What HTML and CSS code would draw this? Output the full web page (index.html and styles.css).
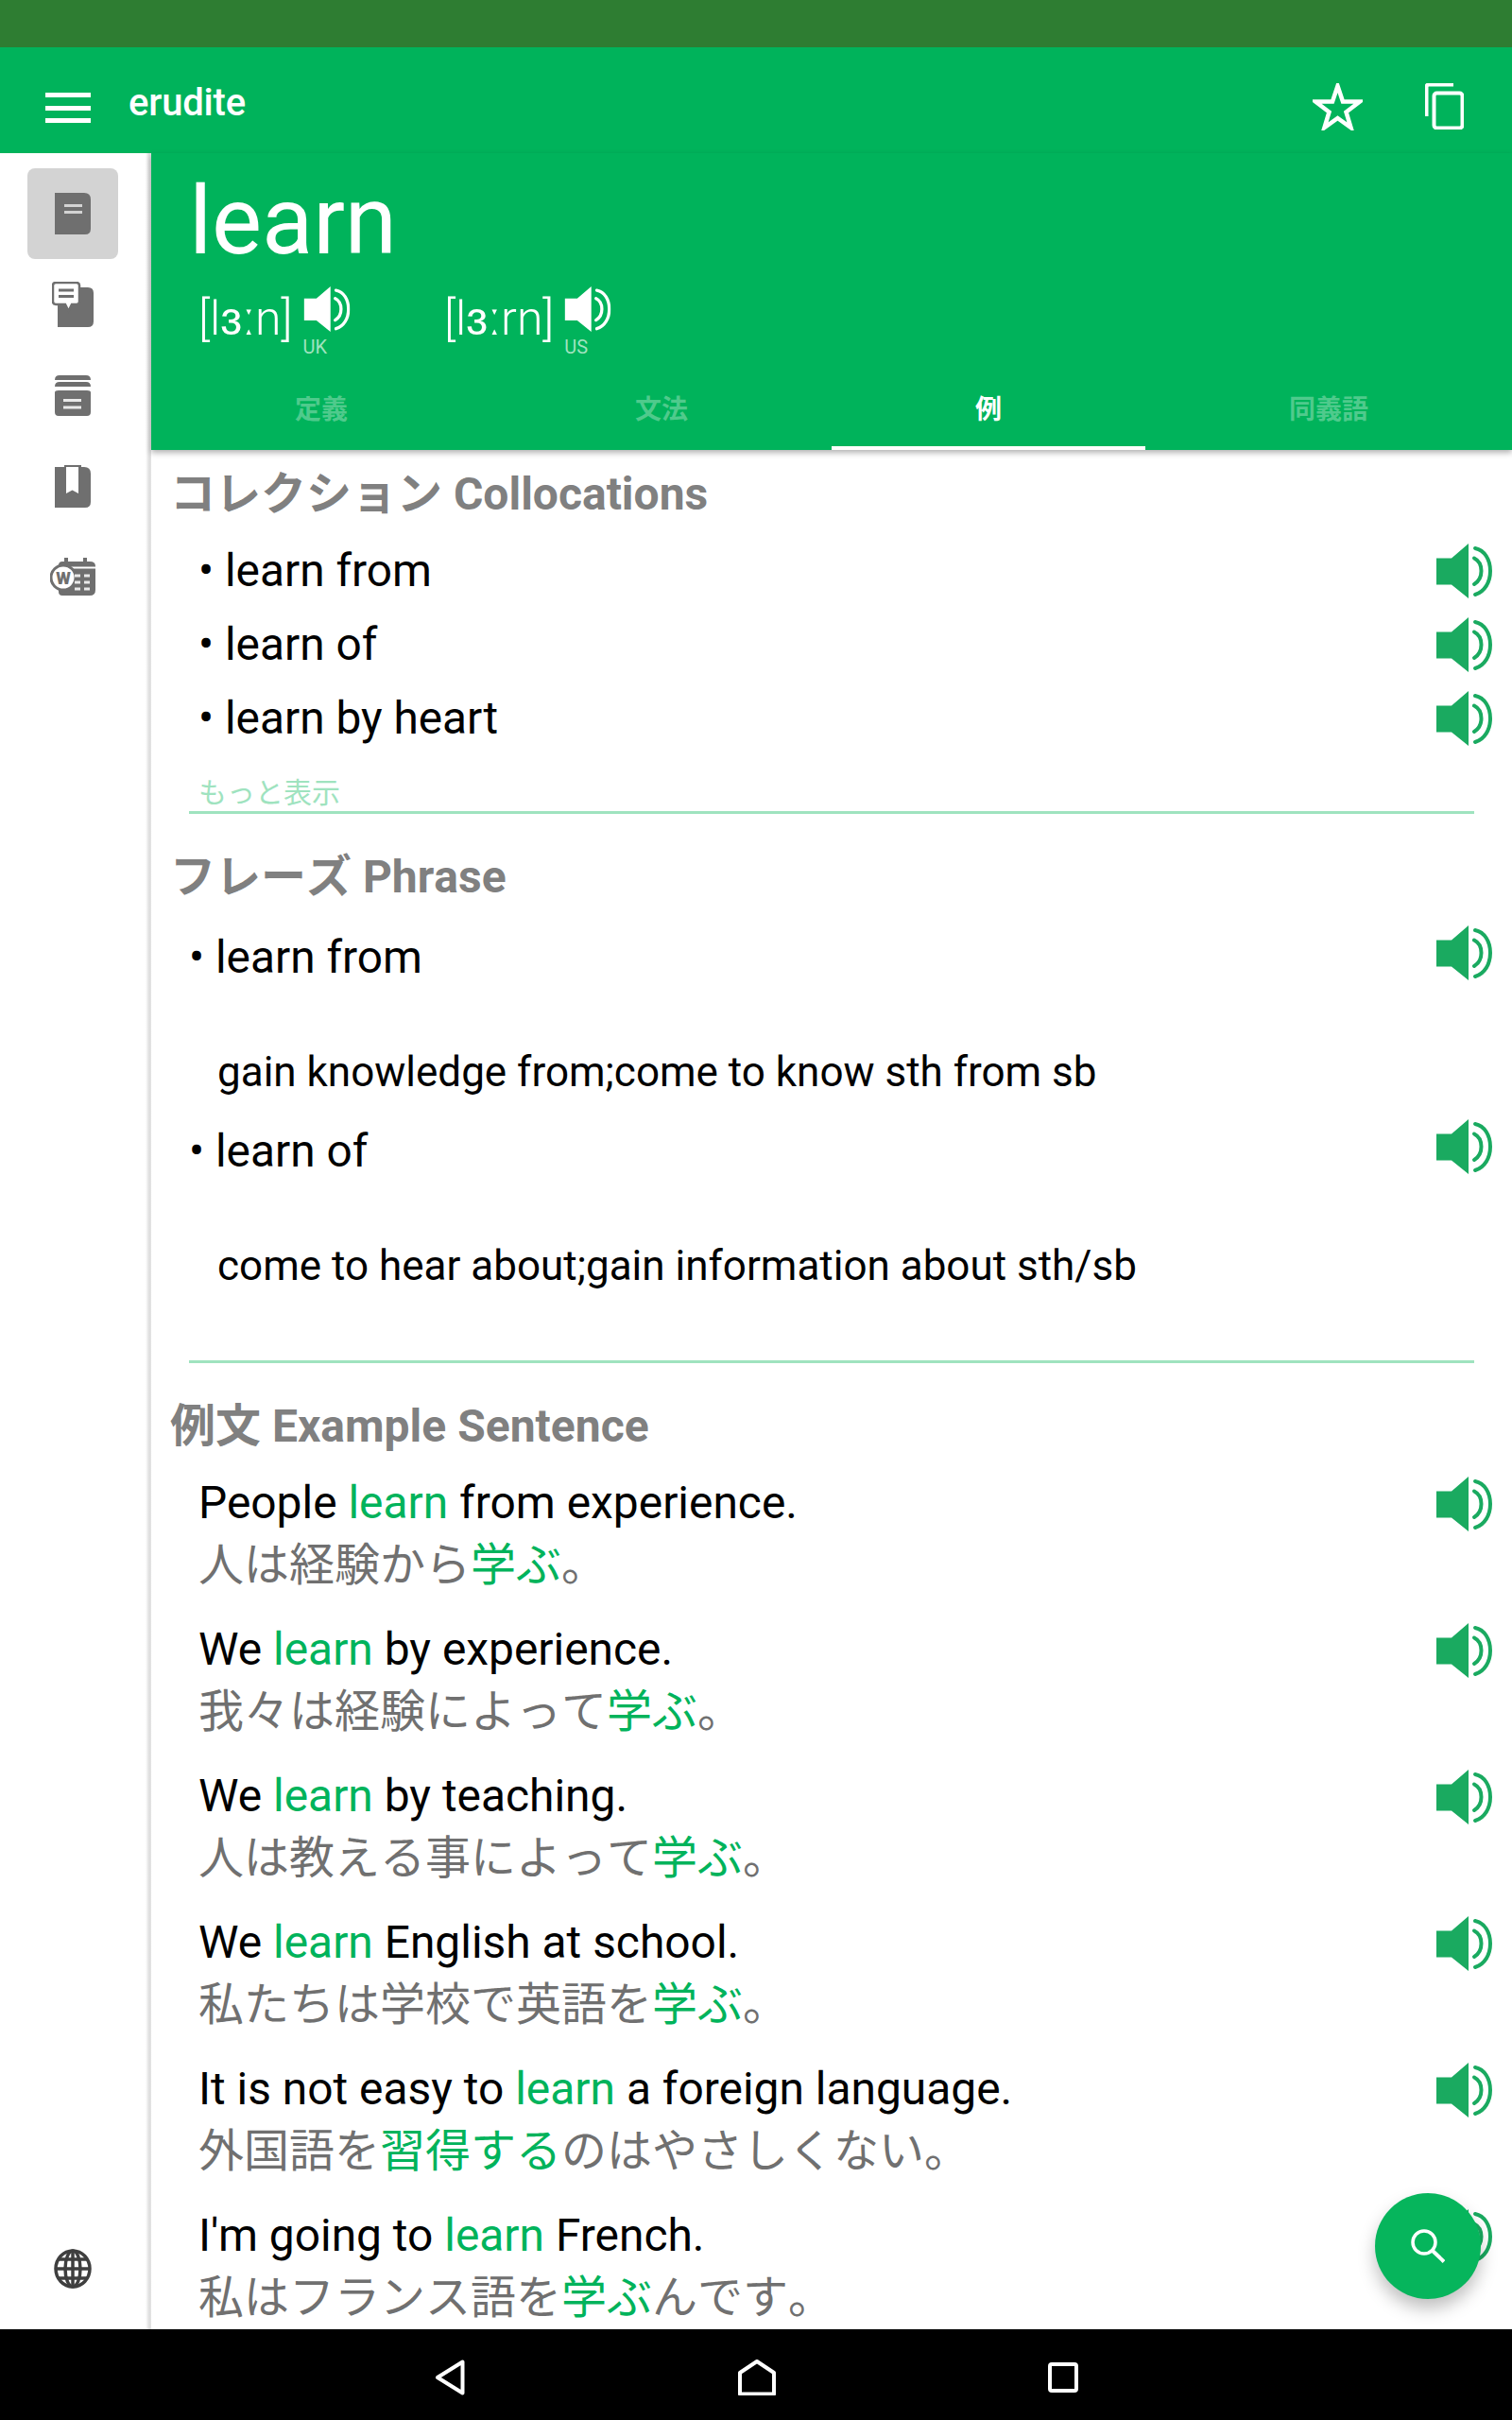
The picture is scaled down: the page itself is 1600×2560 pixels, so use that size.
FILE: index.html
```html
<!DOCTYPE html>
<html lang="ja">
<head>
<meta charset="utf-8">
<title>erudite</title>
<link rel="stylesheet" href="styles.css">
</head>
<body>
<svg class="defs" width="0" height="0">
  <symbol id="spk" viewBox="0 0 59 58">
    <path class="cone" d="M0 15.500H16L34 0V58L16 43.500H0Z"/>
    <path class="wave" d="M41 5C51 7 57 17 57 29S51 51 41 54"/>
    <path class="wave" d="M40 15.500C45 18 47.500 23 47.500 29S45 40 40 43"/>
  </symbol>
</svg>
<div class="screen">
  <div class="status"></div>
  <header class="appbar">
    <button class="menu" aria-label="menu"><span></span><span></span><span></span></button>
    <div class="appname">erudite</div>
    <svg class="star" viewBox="0 0 53 50"><path d="M26.500 3L32 19.500H50L35.500 30.500L40.500 47L26.500 37L12.500 47L17.500 30.500L3 19.500H21Z"/></svg>
    <svg class="copy" viewBox="0 0 41 49"><path class="c1" d="M1.500 35V4Q1.500 1.500 4 1.500H30"/><rect class="c2" x="9.500" y="10.500" width="30" height="37" rx="3"/></svg>
  </header>
  <div class="body">
    <nav class="sidebar">
      <div class="navitem active">
        <svg width="38" height="44" viewBox="0 0 38 44"><path class="ico" d="M0 0H31Q38 0 38 7V38Q38 44 32 44H0Z"/><path class="cut" d="M10 13.500H29M10 20.500H29"/></svg>
      </div>
      <div class="navitem">
        <svg width="44" height="48" viewBox="0 0 44 48"><path class="ico" d="M6 6H38Q44 6 44 12V42Q44 48 38 48H6Z"/><path d="M4 1H26Q29 1 29 4V21Q29 24 26 24H21L17.500 31L14 24H4Q1 24 1 21V4Q1 1 4 1Z" fill="#fff" stroke="#6f6f6f" stroke-width="2.500"/><path class="ln" d="M7 9H23M7 15.500H23"/></svg>
      </div>
      <div class="navitem">
        <svg width="38" height="43" viewBox="0 0 38 43"><path class="ico" d="M0 5Q0 0 5 0H33Q38 0 38 5H0ZM0 12Q0 7 5 7H33Q38 7 38 12H0ZM0 18Q0 16 4 16H34Q38 16 38 18V39Q38 43 34 43H4Q0 43 0 39Z"/><path class="cut" d="M9 26.500H28M9 34H28"/></svg>
      </div>
      <div class="navitem">
        <svg width="38" height="45" viewBox="0 0 38 45"><path class="ico" d="M0 2H10V0H28V2H31Q38 2 38 9V39Q38 45 32 45H0Z"/><path d="M12 2H25V30L18.500 26.500L12 30Z" fill="#fff"/></svg>
      </div>
      <div class="navitem">
        <svg width="48" height="40" viewBox="0 0 48 40"><path class="ico" d="M9 8Q9 4 13 4H15V0H19V4H35V0H39V4H42Q48 4 48 9V34Q48 40 42 40H13Q9 40 9 36Z"/><path class="cut thin" d="M22 10.500H48"/><circle cx="14" cy="21" r="13" fill="#fff" stroke="#6f6f6f" stroke-width="3"/><text x="14" y="27.500" class="wmark">W</text><path class="cut" d="M26 19H32M36 19H42M26 26H32M36 26H42M26 33H32M36 33H42"/></svg>
      </div>
      <div class="globe">
        <svg width="40" height="42" viewBox="0 0 40 42"><g fill="none" stroke="#3f3f3f" stroke-width="3.500"><ellipse cx="20" cy="21" rx="18" ry="19"/><ellipse cx="20" cy="21" rx="8" ry="19"/><path d="M20 3V39M2 21H38M5 11H35M5 31H35"/></g></svg>
      </div>
    </nav>
    <main class="main">
      <section class="wordhead">
        <h1 class="word">learn</h1>
        <div class="phones">
          <div class="phone uk"><span class="ipa">[lɜːn]</span><span class="say"><svg class="wspk" viewBox="0 0 59 58"><use href="#spk"/></svg><small>UK</small></span></div>
          <div class="phone"><span class="ipa">[lɜːrn]</span><span class="say"><svg class="wspk" viewBox="0 0 59 58"><use href="#spk"/></svg><small>US</small></span></div>
        </div>
        <div class="tabs">
          <div class="tab">定義</div>
          <div class="tab">文法</div>
          <div class="tab on">例</div>
          <div class="tab">同義語</div>
        </div>
      </section>
      <div class="content">
        <h2 class="head first">コレクション Collocations</h2>
        <div class="row coll"><span>• learn from</span><svg class="gspk"><use href="#spk"/></svg></div>
        <div class="row coll"><span>• learn of</span><svg class="gspk"><use href="#spk"/></svg></div>
        <div class="row coll"><span>• learn by heart</span><svg class="gspk"><use href="#spk"/></svg></div>
        <div class="more"><span>もっと表示</span></div>

        <h2 class="head second">フレーズ Phrase</h2>
        <div class="row phr"><span>• learn from</span><svg class="gspk"><use href="#spk"/></svg></div>
        <p class="def">gain knowledge from;come to know sth from sb</p>
        <div class="row phr"><span>• learn of</span><svg class="gspk"><use href="#spk"/></svg></div>
        <p class="def">come to hear about;gain information about sth/sb</p>
        <div class="rule"></div>

        <h2 class="head third">例文 Example Sentence</h2>
        <div class="ex"><div class="ex-t"><div class="en">People <em>learn</em> from experience.</div><div class="ja">人は経験から<em>学ぶ</em>。</div></div><svg class="gspk"><use href="#spk"/></svg></div>
        <div class="ex"><div class="ex-t"><div class="en">We <em>learn</em> by experience.</div><div class="ja">我々は経験によって<em>学ぶ</em>。</div></div><svg class="gspk"><use href="#spk"/></svg></div>
        <div class="ex"><div class="ex-t"><div class="en">We <em>learn</em> by teaching.</div><div class="ja">人は教える事によって<em>学ぶ</em>。</div></div><svg class="gspk"><use href="#spk"/></svg></div>
        <div class="ex"><div class="ex-t"><div class="en">We <em>learn</em> English at school.</div><div class="ja">私たちは学校で英語を<em>学ぶ</em>。</div></div><svg class="gspk"><use href="#spk"/></svg></div>
        <div class="ex"><div class="ex-t"><div class="en">It is not easy to <em>learn</em> a foreign language.</div><div class="ja">外国語を<em>習得する</em>のはやさしくない。</div></div><svg class="gspk"><use href="#spk"/></svg></div>
        <div class="ex"><div class="ex-t"><div class="en">I'm going to <em>learn</em> French.</div><div class="ja">私はフランス語を<em>学ぶ</em>んです。</div></div><svg class="gspk"><use href="#spk"/></svg></div>
      </div>
    </main>
    <button class="fab" aria-label="search">
      <svg width="36" height="36" viewBox="0 0 36 36"><circle cx="14" cy="14" r="12" fill="none" stroke="#fff" stroke-width="3.500"/><path d="M23 23L35 34.500" stroke="#fff" stroke-width="4" fill="none"/></svg>
    </button>
  </div>
  <footer class="navbar">
    <svg class="n-back" width="32" height="38" viewBox="0 0 32 38"><path d="M29.500 2.500V35.500L3 19Z"/></svg>
    <svg class="n-home" width="40" height="38" viewBox="0 0 40 38"><path d="M2 36.500V14L20 2L38 14V36.500Z"/></svg>
    <svg class="n-rec" width="32" height="32" viewBox="0 0 32 32"><rect x="2" y="2" width="28" height="28" rx="2"/></svg>
  </footer>
</div>
</body>
</html>
```
FILE: styles.css
```css
* { box-sizing: border-box; }
html, body { margin: 0; padding: 0; }
body { font-family: Roboto, "Noto Sans CJK JP", sans-serif; background: #fff; color: #000; }
.defs { position: absolute; }
.screen { width: 1600px; height: 2560px; display: flex; flex-direction: column; overflow: hidden; }
.status { height: 50px; background: #2e7d32; flex: none; }

.appbar { height: 112px; flex: none; background: #00b35b; display: flex; align-items: flex-start; color: #fff; }
.menu { width: 48px; height: 32px; margin: 48px 0 0 48px; padding: 0; border: 0; background: none; display: flex; flex-direction: column; justify-content: space-between; flex: none; }
.menu span { display: block; height: 5px; background: #fff; }
.appname { margin: 31px 0 0 40px; font-size: 40px; line-height: 56px; font-weight: 500; letter-spacing: -0.2px; }
.star { width: 53px; height: 50px; margin: 38px 0 0 auto; fill: none; stroke: #fff; stroke-width: 4.500; }
.copy { width: 41px; height: 49px; margin: 38px 51px 0 66px; fill: none; stroke: #fff; stroke-width: 4; }

.body { flex: 1; display: flex; min-height: 0; position: relative; }
.sidebar { width: 160px; flex: none; padding-top: 16px; display: flex; flex-direction: column; align-items: center; background: linear-gradient(to right, #fff 154px, #eee 156px, #ddd 158px, #e4e4e4 160px); padding-right: 6px; }
.navitem { width: 96px; height: 96px; flex: none; display: flex; align-items: center; justify-content: center; border-radius: 8px; }
.navitem.active { background: #d3d3d3; }
.ico { fill: #6f6f6f; }
.cut { fill: none; stroke: #fff; stroke-width: 3; opacity: .85; }
.cut.thin { stroke-width: 2; opacity: 1; }
.navitem.active .cut { stroke: #d3d3d3; opacity: 1; }
.ln { fill: none; stroke: #6f6f6f; stroke-width: 3; }
.wmark { font: 900 18px Roboto, sans-serif; fill: #6f6f6f; text-anchor: middle; }
.globe { margin-top: auto; margin-bottom: 43px; height: 42px; }

.main { flex: 1; min-width: 0; display: flex; flex-direction: column; }
.wordhead { height: 314px; flex: none; background: #00b35b; color: #fff; display: flex; flex-direction: column; box-shadow: 0 3px 6px rgba(0,0,0,.3); position: relative; z-index: 1; }
.word { margin: 22px 0 0 40px; font-size: 100px; line-height: 100px; font-weight: 400; height: 114px; letter-spacing: -0.2px; }
.phones { display: flex; margin: 5px 0 0 50px; height: 76px; }
.phone { display: flex; width: 260px; }
.ipa { font-size: 50px; line-height: 60px; font-weight: 300; margin-top: 4px; }
.say { display: flex; flex-direction: column; margin-left: 11px; }
.wspk { width: 50px; height: 48px; color: #fff; }
.cone { fill: currentColor; }
.wave { fill: none; stroke: currentColor; stroke-width: 4; stroke-linecap: round; }
.say small { font-size: 20px; line-height: 24px; color: #9fe3bf; margin-top: 4px; }
.tabs { display: grid; grid-template-columns: 360px 360px 332px 388px; margin-top: auto; height: 80px; }
.tab { display: flex; align-items: center; justify-content: center; font-size: 28px; font-weight: 700; color: #4fca8c; padding-bottom: 11px; }
.tab.on { color: #fff; border-bottom: 4px solid #fff; padding-bottom: 7px; }

.content { flex: 1; min-height: 0; overflow: hidden; background: #fff; }
.head { margin: 0 0 0 20px; font-size: 48px; line-height: 64px; height: 64px; font-weight: 700; color: #808080; font-kerning: none; }
.head.first { margin-top: 15px; margin-bottom: 10px; }
.head.second { margin-top: 35px; margin-bottom: 14px; }
.head.third { margin-top: 35px; margin-bottom: 17px; }
.row { display: flex; justify-content: space-between; align-items: center; height: 78px; font-size: 47.8px; padding-right: 21px; }
.coll { padding-left: 50px; }
.phr { padding-left: 40px; }
.gspk { width: 59px; height: 58px; flex: none; color: #1aaa60; }
.phr .gspk { margin-top: -10px; }
.more { margin: 0 40px; height: 62px; padding: 25px 0 0 10px; border-bottom: 3px solid #9fe3bf; color: #9fe3bf; font-size: 30px; line-height: 30px; }
.def { margin: 43px 0 6px 70px; font-size: 44px; line-height: 78px; height: 78px; }
.rule { margin: 61px 40px 0; height: 3px; background: #9fe3bf; }
.ex { display: flex; justify-content: space-between; align-items: flex-start; padding: 0 21px 25px 50px; height: 155px; }
.ex-t { min-width: 0; }
.en { font-size: 47.9px; line-height: 65px; }
.ja { font-size: 48px; line-height: 65px; color: #707070; font-kerning: none; }
.ex em { font-style: normal; color: #00b35b; }
.ex .gspk { margin-top: 4px; }

.fab { position: absolute; left: 1455px; top: 2158px; width: 112px; height: 112px; border: 0; padding: 0; border-radius: 50%; background: #06b55c; box-shadow: 0 10px 18px rgba(0,0,0,.25); display: flex; align-items: center; justify-content: center; z-index: 2; }
.navbar { height: 96px; flex: none; background: #000; position: relative; display: flex; align-items: center; }
.navbar svg { fill: none; stroke: #fff; stroke-width: 4; stroke-linejoin: round; flex: none; margin-top: 6px; }
.n-back { margin-left: 460px; }
.n-home { margin-left: 289px; }
.n-rec { margin-left: 288px; }
```
